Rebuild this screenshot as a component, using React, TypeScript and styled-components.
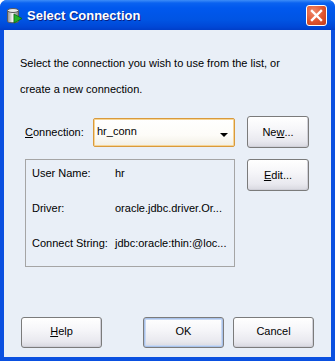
import styled, { createGlobalStyle } from "styled-components";

const GlobalStyle = createGlobalStyle`
  html, body {
    margin: 0;
    padding: 0;
    background: #ffffff;
  }
  body {
    font-family: "Liberation Sans", Arial, sans-serif;
  }
`;

const SelectConnection = () => {
  return (
    <>
      <GlobalStyle />
      <Window>
        <TitleBar>
          <TitleIcon />
          <TitleText>Select Connection</TitleText>
          <CloseButton aria-label="Close">
            <svg width="13" height="13" viewBox="0 0 13 13">
              <path
                d="M2 2 L11 11 M11 2 L2 11"
                stroke="#ffffff"
                strokeWidth="2.4"
                strokeLinecap="square"
              />
            </svg>
          </CloseButton>
        </TitleBar>
        <Client>
          <Intro>
            Select the connection you wish to use from the list, or
            <br />
            create a new connection.
          </Intro>
          <ConnectionRow>
            <Label>
              <u>C</u>onnection:
            </Label>
            <Combo>
              <span>hr_conn</span>
              <Arrow />
            </Combo>
            <Button>
              Ne<u>w</u>...
            </Button>
          </ConnectionRow>
          <DetailsRow>
            <Details>
              <DetailLine>
                <DetailKey>User Name:</DetailKey>
                <span>hr</span>
              </DetailLine>
              <DetailLine>
                <DetailKey>Driver:</DetailKey>
                <span>oracle.jdbc.driver.Or...</span>
              </DetailLine>
              <DetailLine>
                <DetailKey>Connect String:</DetailKey>
                <span>jdbc:oracle:thin:@loc...</span>
              </DetailLine>
            </Details>
            <Button>
              <u>E</u>dit...
            </Button>
          </DetailsRow>
          <Footer>
            <Button $wide>
              <u>H</u>elp
            </Button>
            <FooterGroup>
              <Button $wide $default>
                OK
              </Button>
              <Button $wide>Cancel</Button>
            </FooterGroup>
          </Footer>
        </Client>
      </Window>
    </>
  );
};

const TitleIcon = () => (
  <IconBox>
    <svg width="17" height="18" viewBox="0 0 17 18">
      <defs>
        <linearGradient id="cyl" x1="0" x2="1" y1="0" y2="0">
          <stop offset="0" stopColor="#8c8c8c" />
          <stop offset="0.45" stopColor="#f4f4f4" />
          <stop offset="1" stopColor="#7a7a7a" />
        </linearGradient>
      </defs>
      <path
        d="M1.5 3.5 V14.5 C1.5 16.2 12.5 16.2 12.5 14.5 V3.5 Z"
        fill="url(#cyl)"
        stroke="#5a5a5a"
        strokeWidth="1"
      />
      <ellipse cx="7" cy="3.5" rx="5.5" ry="2" fill="#e8e8e8" stroke="#5a5a5a" strokeWidth="1" />
      <path d="M8 7 L16 11.5 L8 16 Z" fill="#22b22a" stroke="#0d6b12" strokeWidth="0.8" />
    </svg>
  </IconBox>
);

export default SelectConnection;

const Window = styled.div`
  width: 335px;
  height: 361px;
  box-sizing: border-box;
  display: flex;
  flex-direction: column;
  background: #0a50e0;
  border-radius: 7px 7px 0 0;
  overflow: hidden;
`;

const TitleBar = styled.div`
  height: 30px;
  flex: none;
  display: flex;
  align-items: center;
  padding: 0 6px 0 6px;
  background: linear-gradient(
    to bottom,
    #3d8df8 0px,
    #0a62f0 3px,
    #0058ee 8px,
    #0054e3 20px,
    #0047d6 27px,
    #003ec8 30px
  );
`;

const IconBox = styled.div`
  width: 17px;
  height: 18px;
  margin-top: 2px;
  display: flex;
`;

const TitleText = styled.div`
  flex: 1;
  margin-left: 4px;
  margin-top: 1px;
  color: #ffffff;
  font-family: "Liberation Sans", Arial, sans-serif;
  font-weight: bold;
  font-size: 13px;
  text-shadow: 1px 1px 0 #0a1e80;
`;

const CloseButton = styled.div`
  width: 19px;
  height: 19px;
  margin-right: 2px;
  margin-top: 1px;
  border: 1px solid #ffffff;
  border-radius: 3px;
  background: radial-gradient(
    circle at 35% 30%,
    #f08a6c 0%,
    #e0542e 55%,
    #c23c1a 100%
  );
  display: flex;
  align-items: center;
  justify-content: center;
`;

const Client = styled.div`
  flex: 1;
  margin: 0 4px 4px 4px;
  background: #e9eff7;
  display: flex;
  flex-direction: column;
  padding: 20px 0 9px 0;
  font-size: 11px;
  color: #000000;
`;

const Intro = styled.div`
  padding-left: 16px;
  line-height: 26px;
`;

const ConnectionRow = styled.div`
  display: flex;
  align-items: center;
  margin-top: 14px;
  padding-left: 21px;
`;

const Label = styled.div`
  width: 68px;
`;

const Combo = styled.div`
  width: 142px;
  height: 29px;
  box-sizing: border-box;
  margin-right: 12px;
  border: 1px solid #d99a3c;
  box-shadow: inset 0 0 0 1px #f7d595;
  border-radius: 2px;
  background: linear-gradient(to bottom, #ffffff 0%, #fdfcf8 60%, #f2efe4 100%);
  display: flex;
  align-items: flex-start;
  justify-content: space-between;
  padding: 6px 6px 0 3px;
`;

const Arrow = styled.div`
  width: 0;
  height: 0;
  margin-top: 8px;
  border-left: 4px solid transparent;
  border-right: 4px solid transparent;
  border-top: 4px solid #000000;
`;

const Button = styled.div<{ $wide?: boolean; $default?: boolean }>`
  width: ${(p) => (p.$wide ? "81px" : "62px")};
  height: ${(p) => (p.$wide ? "31px" : "32px")};
  box-sizing: border-box;
  border: 1px solid #7b7b7b;
  border-radius: 3px;
  background: linear-gradient(
    to bottom,
    #ffffff 0%,
    #f6f6f9 40%,
    #e9e9ef 80%,
    #d8d8e0 100%
  );
  box-shadow: ${(p) =>
    p.$default
      ? "inset 0 0 0 1px #a9c2ea, inset 0 0 0 2px #c9d9f3"
      : "inset -1px -1px 0 #d0d0d8"};
  display: flex;
  justify-content: center;
  padding-top: ${(p) => (p.$wide ? "7px" : "9px")};
  line-height: 13px;
`;

const DetailsRow = styled.div`
  display: flex;
  align-items: flex-start;
  margin-top: 11px;
  padding-left: 21px;
`;

const Details = styled.div`
  width: 210px;
  height: 108px;
  box-sizing: border-box;
  margin-right: 12px;
  border: 1px solid #a5a5a5;
  display: flex;
  flex-direction: column;
  gap: 17px;
  padding: 4px 0 0 6px;
`;

const DetailLine = styled.div`
  display: flex;
  line-height: 18px;
`;

const DetailKey = styled.div`
  width: 83px;
`;

const Footer = styled.div`
  margin-top: auto;
  display: flex;
  justify-content: space-between;
  padding: 0 17px;
`;

const FooterGroup = styled.div`
  display: flex;
  gap: 9px;
`;
